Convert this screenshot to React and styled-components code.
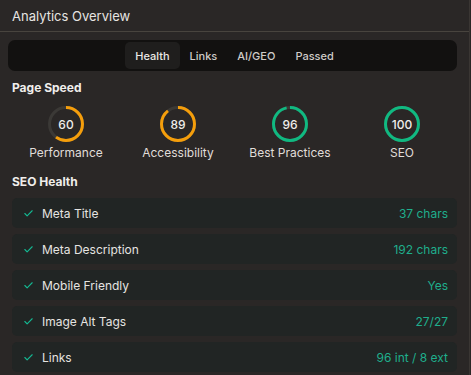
import React from "react";
import styled, { createGlobalStyle } from "styled-components";

const Global = createGlobalStyle`
  html, body {
    margin: 0;
    padding: 0;
    background: #2a2726;
  }
  body {
    font-family: Inter, "Liberation Sans", sans-serif;
  }
`;

const tabs = ["Health", "Links", "AI/GEO", "Passed"];

const scores = [
  { value: 60, label: "Performance", color: "#f59e0b" },
  { value: 89, label: "Accessibility", color: "#f59e0b" },
  { value: 96, label: "Best Practices", color: "#10b981" },
  { value: 100, label: "SEO", color: "#10b981" },
];

const checks = [
  { name: "Meta Title", value: "37 chars" },
  { name: "Meta Description", value: "192 chars" },
  { name: "Mobile Friendly", value: "Yes" },
  { name: "Image Alt Tags", value: "27/27" },
  { name: "Links", value: "96 int / 8 ext" },
];

function Gauge({ value, color }) {
  const r = 16.5;
  const c = 2 * Math.PI * r;
  return (
    <GaugeBox>
      <svg width="36" height="36" viewBox="0 0 36 36">
        <circle cx="18" cy="18" r={r} fill="none" stroke="#3b3936" strokeWidth="3" />
        <circle
          cx="18"
          cy="18"
          r={r}
          fill="none"
          stroke={color}
          strokeWidth="3"
          strokeDasharray={`${(c * value) / 100} ${c}`}
          transform="rotate(-90 18 18)"
        />
      </svg>
      <GaugeValue>{value}</GaugeValue>
    </GaugeBox>
  );
}

function Check() {
  return (
    <svg width="11" height="11" viewBox="0 0 24 24" fill="none" stroke="#14b892" strokeWidth="2.4" strokeLinecap="round" strokeLinejoin="round">
      <path d="M20 6 9 17l-5-5" />
    </svg>
  );
}

export default function App() {
  return (
    <>
      <Global />
      <Panel>
        <Header>Analytics Overview</Header>
        <Body>
          <TabBar>
            {tabs.map((t, i) => (
              <Tab key={t} $active={i === 0}>{t}</Tab>
            ))}
          </TabBar>
          <SectionTitle>Page Speed</SectionTitle>
          <Gauges>
            {scores.map((s) => (
              <GaugeItem key={s.label}>
                <Gauge value={s.value} color={s.color} />
                <GaugeLabel>{s.label}</GaugeLabel>
              </GaugeItem>
            ))}
          </Gauges>
          <SectionTitle $top={14}>SEO Health</SectionTitle>
          <List>
            {checks.map((c) => (
              <Row key={c.name}>
                <Check />
                <RowName>{c.name}</RowName>
                <RowValue>{c.value}</RowValue>
              </Row>
            ))}
          </List>
        </Body>
      </Panel>
    </>
  );
}

const Panel = styled.div`
  width: 469px;
  height: 375px;
  background: #2a2726;
  border-right: 1px solid #3a3633;
  overflow: hidden;
  color: #e8e6e3;
`;

const Header = styled.div`
  height: 32px;
  box-sizing: border-box;
  padding: 0 12px;
  display: flex;
  align-items: center;
  font-size: 13px;
  color: #e6e4e1;
  border-bottom: 1px solid #48443e;
`;

const Body = styled.div`
  padding: 8px 12px 0 8px;
`;

const TabBar = styled.div`
  height: 31px;
  box-sizing: border-box;
  background: #121110;
  border-radius: 7px;
  display: flex;
  align-items: center;
  justify-content: center;
  padding: 2px 2px 2px 6px;
`;

const Tab = styled.div`
  height: 27px;
  display: flex;
  align-items: center;
  padding: 0 10px;
  border-radius: 5px;
  font-size: 11px;
  font-weight: 500;
  color: ${(p) => (p.$active ? "#ebe9e6" : "#cfccc8")};
  background: ${(p) => (p.$active ? "#1f1e1d" : "transparent")};
`;

const SectionTitle = styled.div`
  margin: ${(p) => p.$top ?? 9}px 0 0 4px;
  font-size: 12px;
  font-weight: 700;
  color: #f0eeeb;
  line-height: 15px;
`;

const Gauges = styled.div`
  display: grid;
  grid-template-columns: repeat(4, 112px);
  margin: 0 0 0 2px;
`;

const GaugeItem = styled.div`
  display: flex;
  flex-direction: column;
  align-items: center;
`;

const GaugeBox = styled.div`
  position: relative;
  width: 36px;
  height: 36px;
  margin-top: 11px;
`;

const GaugeValue = styled.div`
  position: absolute;
  inset: 0;
  display: flex;
  align-items: center;
  justify-content: center;
  font-size: 12px;
  font-weight: 500;
  color: #f0eeeb;
`;

const GaugeLabel = styled.div`
  margin-top: 3px;
  font-size: 12px;
  color: #e0ddd9;
  line-height: 15px;
`;

const List = styled.div`
  display: flex;
  flex-direction: column;
  gap: 6px;
  margin: 9px 0 0 4px;
`;

const Row = styled.div`
  height: 30px;
  box-sizing: border-box;
  display: flex;
  align-items: center;
  padding: 0 9px 0 11px;
  background: #212524;
  border-radius: 5px;
`;

const RowName = styled.span`
  margin-left: 8px;
  font-size: 12px;
  color: #e6e4e1;
  flex: 1;
`;

const RowValue = styled.span`
  font-size: 12px;
  color: #1fae8c;
`;
